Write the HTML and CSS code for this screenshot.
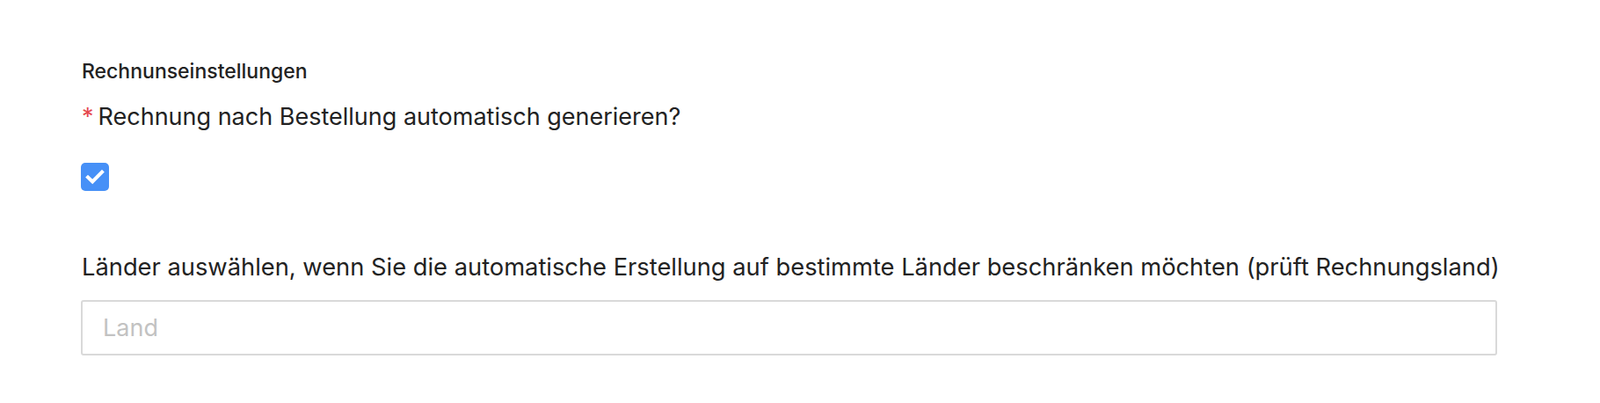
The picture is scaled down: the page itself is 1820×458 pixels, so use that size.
FILE: index.html
```html
<html>
<head>
  <meta charset="UTF-8">
  <title>Rechnunseinstellungen</title>
  <link rel="stylesheet" href="styles.css">
</head>
<body>
  <div class="settings">
    <h4 class="section-title">Rechnunseinstellungen</h4>

    <div class="field">
      <label class="field-label"><span class="required">*</span>Rechnung nach Bestellung automatisch generieren?</label>
      <label class="check">
        <input type="checkbox" checked>
        <span class="box">
          <svg width="32" height="32" viewBox="0 0 32 32"><path d="M8 16.5 L13.2 21.5 L24 10.5" fill="none" stroke="#fff" stroke-width="4" stroke-linecap="square"/></svg>
        </span>
      </label>
    </div>

    <div class="field">
      <label class="field-label wide">Länder auswählen, wenn Sie die automatische Erstellung auf bestimmte Länder beschränken möchten (prüft Rechnungsland)</label>
      <input class="text-input" type="text" placeholder="Land">
    </div>
  </div>
</body>
</html>
```

FILE: styles.css
```css
body {
  margin: 0;
  background: #fff;
  color: #222;
  font-family: Inter, "Noto Sans", sans-serif;
}

.settings {
  padding: 66px 117px 0 92px;
}

.section-title {
  margin: 0 0 19px 1px;
  font-size: 23px;
  font-weight: 500;
  line-height: 30px;
}

.field {
  margin-bottom: 69px;
}

.field-label {
  display: block;
  font-size: 27px;
  line-height: 36px;
  margin-bottom: 34px;
  padding-left: 1px;
  white-space: nowrap;
}

.field-label.wide {
  font-size: 27.3px;
}

.field:last-child .field-label {
  margin-bottom: 19px;
}

.required {
  color: #e5484d;
  margin-right: 5px;
}

.check {
  display: inline-block;
  vertical-align: top;
  cursor: pointer;
}

.check input {
  display: none;
}

.box {
  display: block;
  width: 32px;
  height: 32px;
  border-radius: 5px;
  background: #4690f7;
}

.box svg {
  display: block;
}

.text-input {
  box-sizing: border-box;
  display: block;
  width: 100%;
  height: 63px;
  padding: 0 23px;
  border: 2px solid #d9d9d9;
  border-radius: 3px;
  font-family: Inter, "Noto Sans", sans-serif;
  font-size: 27px;
  color: #222;
  outline: none;
}

.text-input::placeholder {
  color: #c2c2c2;
}
```
